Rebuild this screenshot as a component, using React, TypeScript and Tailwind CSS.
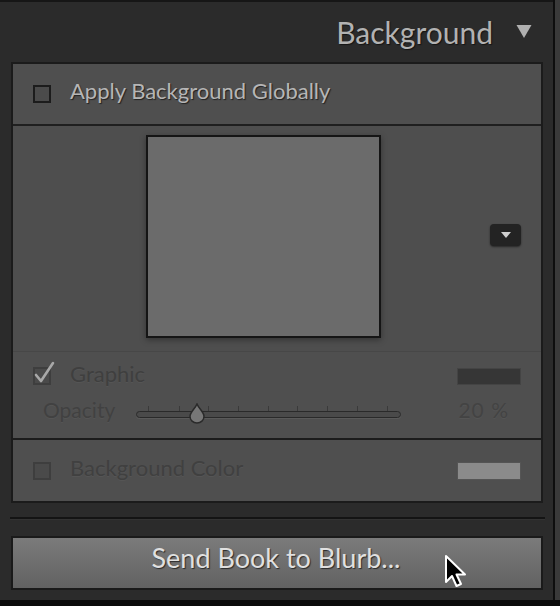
import React from "react";

const font = { fontFamily: "Lato, 'Noto Sans', sans-serif" };

function Checkbox({ checked = false, dim = false }: { checked?: boolean; dim?: boolean }) {
  return (
    <div className="relative w-[18px] h-[18px] shrink-0">
      <div
        className={
          dim
            ? "w-[18px] h-[18px] border-2 border-[#3e3e3e] bg-[#4a4a4a]"
            : "w-[18px] h-[18px] border-2 border-[#1c1c1c] bg-[#4b4b4b]"
        }
      />
      {checked && (
        <svg className="absolute left-[1px] top-[-6px]" width="22" height="24" viewBox="0 0 22 24">
          <path d="M2 14 L7 20 L19 2" fill="none" stroke="#a8a8a8" strokeWidth="2.6" strokeLinecap="round" strokeLinejoin="round" />
        </svg>
      )}
    </div>
  );
}

export default function App() {
  const ticks = [148, 179, 208, 238, 268, 297, 327, 357, 387];
  return (
    <div className="w-[560px] h-[606px] bg-[#2b2b2b] flex flex-col overflow-hidden relative" style={font}>
      <div className="flex flex-1 min-h-0">
        <div className="w-[553px] flex flex-col">
          <div className="h-[2px] bg-[#161616]" />
          {/* header */}
          <div className="h-[60px] flex items-center justify-end pr-[21px]">
            <span
              className="text-[30px] text-[#b2b2b2] leading-none mr-[23px] mt-[-1px]"
              style={{ textShadow: "1px 1px 1px #151515" }}
            >
              Background
            </span>
            <svg width="16" height="15" viewBox="0 0 16 15" className="mt-[-2px]">
              <path d="M0.5 1 L15.5 1 L8 14 Z" fill="#b0b0b0" />
            </svg>
          </div>
          {/* panel */}
          <div className="ml-[11px] w-[532px] border-2 border-[#1b1b1b] bg-[#4f4f4f] flex flex-col">
            <div className="h-[60px] flex items-center pl-[20px] gap-[19px]">
              <Checkbox />
              <span className="text-[22px] leading-none mt-[-7px] text-[#b6b6b6]" style={{ textShadow: "1px 1px 1px #222" }}>
                Apply Background Globally
              </span>
            </div>
            <div className="h-[2px] bg-[#1f1f1f]" />
            <div className="h-[225px] bg-[#4e4e4e] relative flex items-start">
              <div
                className="ml-[133px] mt-[9px] w-[235px] h-[203px] border-2 border-[#151515] bg-[#6b6b6b]"
                style={{ boxShadow: "0 2px 6px rgba(0,0,0,0.35)" }}
              />
              <div className="ml-auto mr-[20px] mt-[98px] w-[31px] h-[22px] rounded-[4px] bg-[#232323] flex items-center justify-center" style={{ boxShadow: "0 1px 2px rgba(0,0,0,0.5)" }}>
                <svg width="10" height="7" viewBox="0 0 10 7">
                  <path d="M0 0 L10 0 L5 6 Z" fill="#cfcfcf" />
                </svg>
              </div>
            </div>
            <div className="h-[1px] bg-[#474747]" />
            <div className="h-[86px] flex flex-col">
              <div className="flex items-center h-[36px] mt-[6px] pl-[20px]">
                <Checkbox checked dim />
                <span className="ml-[19px] text-[22px] leading-none mt-[-4px] text-[#3f3f3f]" style={{ textShadow: "0 1px 0 #555" }}>
                  Graphic
                </span>
                <div className="ml-auto mr-[20px] w-[64px] h-[17px] bg-[#363636] border border-[#444]" />
              </div>
              <div className="flex items-center h-[36px] pl-[30px] relative">
                <span className="text-[21px] leading-none mt-[-5px] text-[#414141]" style={{ textShadow: "0 1px 0 #555" }}>
                  Opacity
                </span>
                <div className="relative ml-[21px] w-[265px] h-[30px]">
                  {ticks.map((t) => (
                    <div key={t} className="absolute top-[9px] w-[1px] h-[5px] bg-[#3a3a3a]" style={{ left: t - 136 }} />
                  ))}
                  <div className="absolute left-0 top-[14px] w-[265px] h-[7px] rounded-full border border-[#2a2a2a] bg-[#4a4a4a]" style={{ boxShadow: "0 1px 0 #5a5a5a" }} />
                  <svg className="absolute top-[6px]" style={{ left: 52 }} width="18" height="21" viewBox="0 0 18 21">
                    <path d="M9 1 C11 6 16 9 16 13.5 A7 6.5 0 0 1 2 13.5 C2 9 7 6 9 1 Z" fill="#777" stroke="#2a2a2a" strokeWidth="1.5" />
                  </svg>
                </div>
                <span className="ml-auto mr-[32px] text-[21px] leading-none mt-[-5px] text-[#434343] tracking-[1px]" style={{ textShadow: "0 1px 0 #555" }}>
                  20 %
                </span>
              </div>
            </div>
            <div className="h-[2px] bg-[#1c1c1c]" />
            <div className="h-[61px] flex items-center pl-[20px]">
              <Checkbox dim />
              <span className="ml-[19px] text-[22px] leading-none mt-[-5px] text-[#404040]" style={{ textShadow: "0 1px 0 #555" }}>
                Background Color
              </span>
              <div className="ml-auto mr-[20px] w-[64px] h-[18px] bg-[#8b8b8b] border border-[#555]" />
            </div>
          </div>
          {/* separator */}
          <div className="mt-[14px] ml-[10px] w-[535px] h-[2px] bg-[#141414]" />
          <div className="ml-[10px] w-[535px] h-[1px] bg-[#333]" />
          {/* button */}
          <div className="mt-[16px] ml-[11px] w-[532px] h-[54px] border-2 border-[#1a1a1a] flex items-center justify-center bg-gradient-to-b from-[#7b7b7b] to-[#626262]">
            <span className="text-[27px] leading-none text-[#e0e0e0] ml-[-2px] mt-[-11px]" style={{ textShadow: "1px 1px 1px #2a2a2a" }}>
              Send Book to Blurb...
            </span>
          </div>
        </div>
        <div className="w-[2px] bg-[#0e0e0e]" />
        <div className="flex-1 bg-[#3a3a3a]" />
      </div>
      <div className="h-[6px] bg-[#0b0b0b]" />
      {/* cursor */}
      <svg className="absolute left-[444px] top-[554px]" width="26" height="36" viewBox="0 0 26 36">
        <path d="M2 2 L2 28 L8 22 L12.5 32 L17 30 L12.5 20.5 L21 20.5 Z" fill="#000" stroke="#fff" strokeWidth="2" strokeLinejoin="round" />
      </svg>
    </div>
  );
}
